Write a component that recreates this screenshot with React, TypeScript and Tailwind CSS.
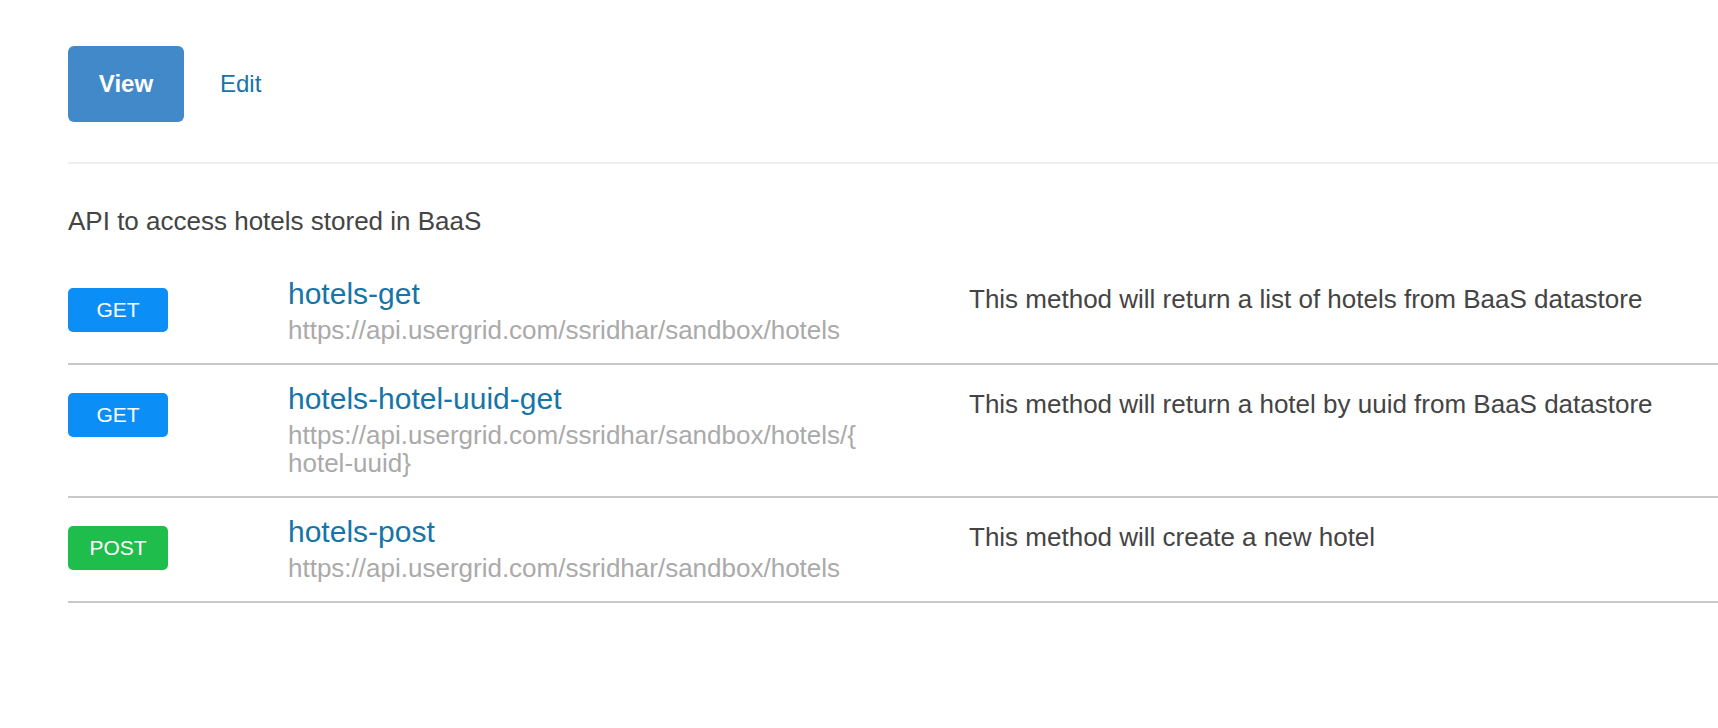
import React from "react";

interface Method {
  verb: "GET" | "POST";
  name: string;
  url: string[];
  description: string;
}

const methods: Method[] = [
  {
    verb: "GET",
    name: "hotels-get",
    url: ["https://api.usergrid.com/ssridhar/sandbox/hotels"],
    description: "This method will return a list of hotels from BaaS datastore",
  },
  {
    verb: "GET",
    name: "hotels-hotel-uuid-get",
    url: ["https://api.usergrid.com/ssridhar/sandbox/hotels/{", "hotel-uuid}"],
    description: "This method will return a hotel by uuid from BaaS datastore",
  },
  {
    verb: "POST",
    name: "hotels-post",
    url: ["https://api.usergrid.com/ssridhar/sandbox/hotels"],
    description: "This method will create a new hotel",
  },
];

function VerbBadge({ verb }: { verb: Method["verb"] }) {
  return (
    <span
      className={
        verb === "GET"
          ? "flex h-[44px] w-[100px] items-center justify-center rounded-[5px] bg-[#0b8ff7] text-[21px] text-white"
          : "flex h-[44px] w-[100px] items-center justify-center rounded-[5px] bg-[#1fbd4b] text-[21px] text-white"
      }
    >
      {verb}
    </span>
  );
}

function MethodRow({ method }: { method: Method }) {
  return (
    <div className="flex border-b-2 border-[#c9c9c9]">
      <div className="w-[220px] shrink-0 pt-[28px]">
        <VerbBadge verb={method.verb} />
      </div>
      <div className="w-[681px] shrink-0 pt-[16px] pb-[19px]">
        <a href="#" className="block text-[30px] leading-[36px] text-[#1675a8]">
          {method.name}
        </a>
        <div className="mt-[4px] text-[26px] leading-[28px] text-[#aaaaaa]">
          {method.url.map((line, i) => (
            <div key={i}>{line}</div>
          ))}
        </div>
      </div>
      <div className="flex-1 pt-[21px] text-[26px] leading-[36px] text-[#444444]">
        {method.description}
      </div>
    </div>
  );
}

export default function App() {
  return (
    <div className="min-h-screen overflow-hidden bg-white font-['Liberation_Sans',Arial,sans-serif] text-[#444444]">
      <div className="pl-[68px] pt-[46px]">
        <div className="flex items-center gap-[36px]">
          <button className="h-[76px] w-[116px] rounded-[6px] bg-[#4289ca] text-[24px] font-bold text-white">
            View
          </button>
          <a href="#" className="text-[24px] text-[#1675a8]">
            Edit
          </a>
        </div>

        <div className="mt-[40px] h-[2px] bg-[#eeeeee]" />

        <p className="mt-[39px] text-[26px] leading-[37px]">
          API to access hotels stored in BaaS
        </p>

        <div className="mt-[20px]">
          {methods.map((m) => (
            <MethodRow key={m.name} method={m} />
          ))}
        </div>
      </div>
    </div>
  );
}
